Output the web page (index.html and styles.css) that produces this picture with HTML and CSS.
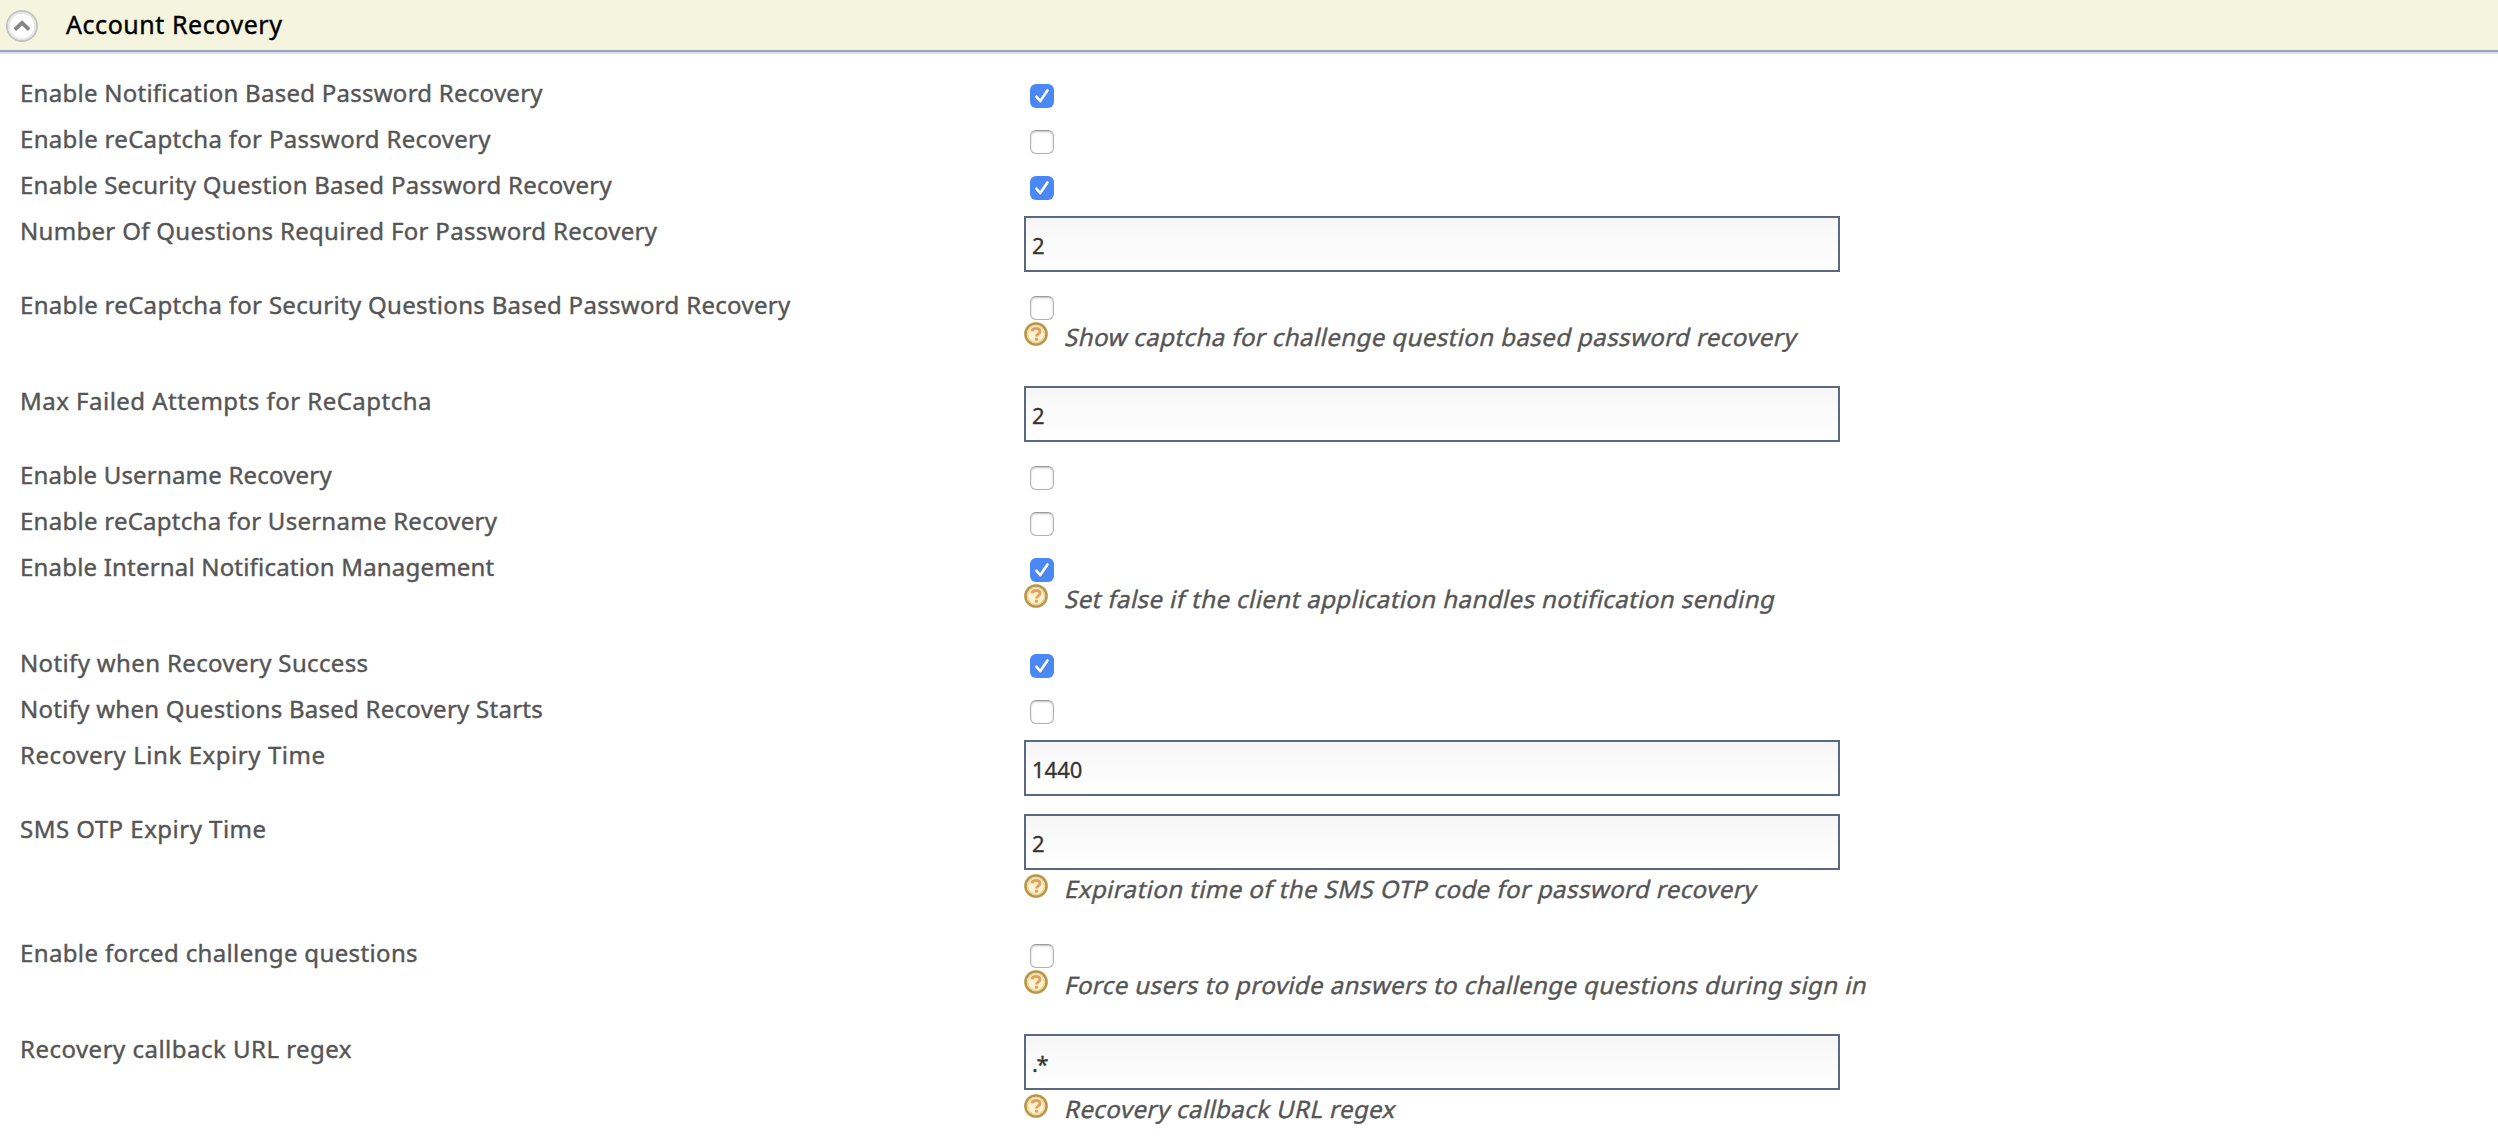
FILE: index.html
```html
<!DOCTYPE html>
<html lang="en">
<head>
<meta charset="utf-8">
<title>Account Recovery</title>
<link rel="stylesheet" href="styles.css">
</head>
<body>
<svg class="defs" width="0" height="0">
  <defs>
    <symbol id="help" viewBox="0 0 24 24">
      <circle cx="12" cy="12" r="12" fill="#d9c48c"/>
      <circle cx="12" cy="12" r="10.400" fill="#fbf3cf" stroke="#b8954a" stroke-width="2.400"/>
      <circle cx="12" cy="12" r="8.600" fill="none" stroke="#e9d49a" stroke-width="1.400"/>
      <path d="M8 9.400C8.200 7.300 9.700 6.500 12 6.500s4 .9 4 2.900c0 2.500-3.400 2.400-3.400 5" fill="none" stroke="#e5a060" stroke-width="2.900"/>
      <circle cx="12.500" cy="17.300" r="1.700" fill="#e5a060"/>
    </symbol>
  </defs>
</svg>

<header class="section-head">
  <svg class="toggle" viewBox="0 0 32 32">
    <circle cx="16" cy="16" r="15" fill="#fff" stroke="#c2c2c2" stroke-width="2"/>
    <circle cx="16" cy="16" r="13.200" fill="none" stroke="#e6e6e6" stroke-width="1.800"/>
    <path d="M8.800 19.600 16 12.800l7.200 6.800" fill="none" stroke="#858585" stroke-width="3.800"/>
  </svg>
  <h2 class="title">Account Recovery</h2>
</header>

<main class="form">
  <div class="row"><label class="label t26">Enable Notification Based Password Recovery</label><div class="field"><input class="check" type="checkbox" checked></div></div>
  <div class="row"><label class="label t32">Enable reCaptcha for Password Recovery</label><div class="field"><input class="check" type="checkbox"></div></div>
  <div class="row"><label class="label t26">Enable Security Question Based Password Recovery</label><div class="field"><input class="check" type="checkbox" checked></div></div>
  <div class="row"><label class="label t32">Number Of Questions Required For Password Recovery</label><div class="field"><input class="text" type="text" value="2"></div></div>
  <div class="row"><label class="label t32">Enable reCaptcha for Security Questions Based Password Recovery</label><div class="field"><input class="check" type="checkbox">
    <div class="hint"><svg class="help"><use href="#help"/></svg><span class="hint-text">Show captcha for challenge question based password recovery</span></div></div></div>
  <div class="row"><label class="label t50">Max Failed Attempts for ReCaptcha</label><div class="field"><input class="text" type="text" value="2"></div></div>
  <div class="row"><label class="label t20">Enable Username Recovery</label><div class="field"><input class="check" type="checkbox"></div></div>
  <div class="row"><label class="label t26">Enable reCaptcha for Username Recovery</label><div class="field"><input class="check" type="checkbox"></div></div>
  <div class="row"><label class="label t20">Enable Internal Notification Management</label><div class="field"><input class="check" type="checkbox" checked>
    <div class="hint"><svg class="help"><use href="#help"/></svg><span class="hint-text">Set false if the client application handles notification sending</span></div></div></div>
  <div class="row"><label class="label t38">Notify when Recovery Success</label><div class="field"><input class="check" type="checkbox" checked></div></div>
  <div class="row"><label class="label t26">Notify when Questions Based Recovery Starts</label><div class="field"><input class="check" type="checkbox"></div></div>
  <div class="row"><label class="label t58">Recovery Link Expiry Time</label><div class="field"><input class="text" type="text" value="1440"></div></div>
  <div class="row"><label class="label t50">SMS OTP Expiry Time</label><div class="field"><input class="text" type="text" value="2">
    <div class="hint"><svg class="help"><use href="#help"/></svg><span class="hint-text">Expiration time of the SMS OTP code for password recovery</span></div></div></div>
  <div class="row"><label class="label t38">Enable forced challenge questions</label><div class="field"><input class="check" type="checkbox">
    <div class="hint"><svg class="help"><use href="#help"/></svg><span class="hint-text">Force users to provide answers to challenge questions during sign in</span></div></div></div>
  <div class="row"><label class="label t50">Recovery callback URL regex</label><div class="field"><input class="text tight" type="text" value=".*">
    <div class="hint"><svg class="help"><use href="#help"/></svg><span class="hint-text">Recovery callback URL regex</span></div></div></div>
</main>
</body>
</html>
```
FILE: styles.css
```css
* { box-sizing: border-box; }
html { overflow: hidden; }
body { margin: 0; background: #fff; font-family: "Noto Sans", "Open Sans", sans-serif; }
.defs { display: block; }

.section-head {
  display: flex;
  align-items: flex-start;
  height: 54px;
  padding: 10px 0 0 6px;
  background: #f5f4de;
  border-bottom: 2px solid #dcdde0;
  box-shadow: inset 0 -2px 0 #94a5c8;
}
.toggle { width: 32px; height: 32px; }
.title {
  margin: -1px 0 0 28px;
  font-size: 25px;
  font-weight: 400;
  line-height: 30px;
  letter-spacing: .55px;
  color: #000;
  -webkit-text-stroke: .4px #000;
}

.form { display: flex; flex-direction: column; padding: 18px 0 0 20px; }
.row { display: grid; grid-template-columns: 1004px 1fr; }
.label {
  padding-top: 5px;
  font-size: 24px;
  line-height: 32px;
  color: #555;
  white-space: nowrap;
  -webkit-text-stroke: .4px #555;
}
.t20 { letter-spacing: .19px; }
.t26 { letter-spacing: .26px; }
.t32 { letter-spacing: .31px; }
.t38 { letter-spacing: .36px; }
.t50 { letter-spacing: .48px; }
.t58 { letter-spacing: .56px; }

.field { display: flex; flex-direction: column; align-items: flex-start; }
.check {
  appearance: none;
  width: 24px;
  height: 24px;
  margin: 12px 0 10px 6px;
  border: 1px solid #b2b2b2;
  border-top-color: #999;
  border-radius: 6px;
  background: #fff;
  box-shadow: inset 0 1px 2px rgba(0, 0, 0, .25);
}
.check:checked {
  border: 0;
  box-shadow: none;
  background: #4a88f5 url('data:image/svg+xml,<svg xmlns="http://www.w3.org/2000/svg" viewBox="0 0 24 24"><path d="M6.500 13.700 10.200 18 17.800 7" fill="none" stroke="%232f62c4" stroke-opacity=".5" stroke-width="2.600" stroke-linecap="round"/><path d="M6.500 12.800 10.200 17.200 17.500 6.500" fill="none" stroke="white" stroke-width="2.700" stroke-linecap="round" stroke-linejoin="round"/></svg>');
}
.text {
  width: 816px;
  height: 56px;
  margin: 6px 0 12px;
  padding: 2px 6px 0;
  border: 2px solid #5b6980;
  background: linear-gradient(#f6f6f6, #fff);
  font: 22px "Noto Sans", sans-serif;
  color: #333;
  -webkit-text-stroke: .3px #333;
}
.tight { letter-spacing: -1.5px; }
.hint { display: flex; align-items: flex-start; height: 58px; margin-top: -8px; }
.help { width: 24px; height: 24px; }
.hint-text {
  margin: -1px 0 0 16px;
  font-size: 24px;
  line-height: 32px;
  letter-spacing: .43px;
  color: #555;
  white-space: nowrap;
  transform: skewX(-13deg);
  transform-origin: 0 24px;
  -webkit-text-stroke: .4px #555;
}
```
